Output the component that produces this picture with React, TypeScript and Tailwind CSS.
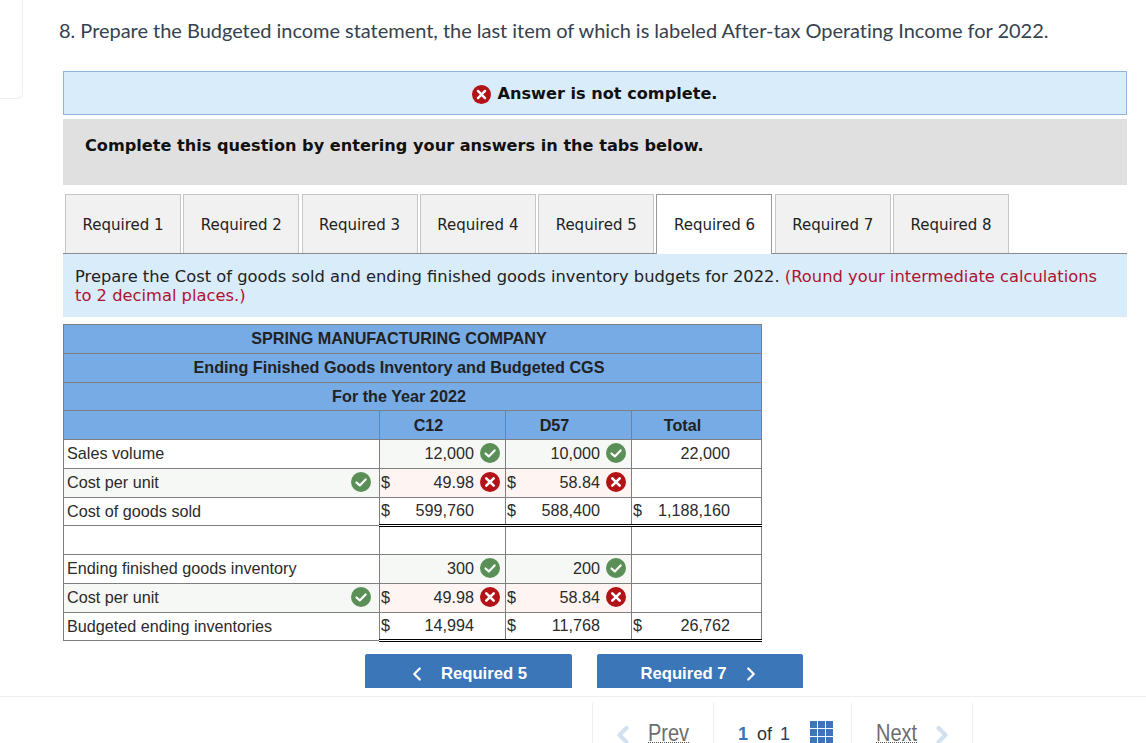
import { ChevronLeft, ChevronRight } from "lucide-react";

const tabs = [1, 2, 3, 4, 5, 6, 7, 8];

function CheckIcon({ size = 20 }: { size?: number }) {
  return (
    <svg width={size} height={size} viewBox="0 0 20 20" className="shrink-0">
      <circle cx="10" cy="10" r="10" fill="#5a8f57" />
      <path d="M5.5 10.5 L8.8 13.4 L14.6 7.4" fill="none" stroke="#fff" strokeWidth="2.2" strokeLinecap="round" strokeLinejoin="round" />
    </svg>
  );
}

function CrossIcon({ size = 20 }: { size?: number }) {
  return (
    <svg width={size} height={size} viewBox="0 0 20 20" className="shrink-0">
      <circle cx="10" cy="10" r="10" fill="#b31217" />
      <path d="M6.3 6.3 L13.7 13.7 M13.7 6.3 L6.3 13.7" fill="none" stroke="#fff" strokeWidth="2.6" strokeLinecap="round" />
    </svg>
  );
}

type Mark = "ok" | "bad";

function ValueCell({
  value,
  dollar,
  mark,
  total,
  underline,
}: {
  value?: string;
  dollar?: boolean;
  mark?: Mark;
  total?: boolean;
  underline?: boolean;
}) {
  const bg = mark === "ok" ? "bg-[#f6f8f5]" : mark === "bad" ? "bg-[#fef4f2]" : "bg-white";
  const border = total ? "border-b-[3px] border-b-black border-double" : underline ? "border-b-black" : "";
  return (
    <td className={`border border-[#7f7f7f] p-0 pb-[2px] ${bg} ${border}`}>
      <div className="flex items-center pl-[1px]">
        {dollar && <span>$</span>}
        <span className="flex-1 text-right">{value}</span>
        <span className="flex w-[31px] shrink-0 justify-end pr-[5px]">
          {mark === "ok" && <CheckIcon />}
          {mark === "bad" && <CrossIcon />}
        </span>
      </div>
    </td>
  );
}

function LabelCell({ label, ok }: { label?: string; ok?: boolean }) {
  return (
    <td className={`border border-[#7f7f7f] p-0 pb-[2px] pl-[3px] ${ok ? "bg-[#f6f8f5]" : "bg-white"}`}>
      <div className="flex items-center justify-between pr-[8px]">
        <span>{label}</span>
        {ok && <CheckIcon />}
      </div>
    </td>
  );
}

function TitleRow({ text, height }: { text: string; height: string }) {
  return (
    <tr className={height}>
      <td colSpan={4} className="border border-[#7f7f7f] bg-[#76abe5] p-0 pb-[2px] pr-[27px] text-center font-bold text-[#222]">
        {text}
      </td>
    </tr>
  );
}

function HeadCell({ text }: { text?: string }) {
  return (
    <td className="border border-[#7f7f7f] bg-[#76abe5] p-0 pr-[28px] text-center font-bold text-[#222]">{text}</td>
  );
}

function BudgetTable() {
  return (
    <table className="w-[698px] table-fixed border-collapse font-['Liberation_Sans',Arial,sans-serif] text-[16.2px] leading-[18px] text-[#2b2b2b]">
      <colgroup>
        <col className="w-[316px]" />
        <col className="w-[126px]" />
        <col className="w-[126px]" />
        <col className="w-[130px]" />
      </colgroup>
      <tbody>
        <TitleRow text="SPRING MANUFACTURING COMPANY" height="h-[29px]" />
        <TitleRow text="Ending Finished Goods Inventory and Budgeted CGS" height="h-[29px]" />
        <TitleRow text="For the Year 2022" height="h-[28px]" />
        <tr className="h-[29px]">
          <HeadCell />
          <HeadCell text="C12" />
          <HeadCell text="D57" />
          <HeadCell text="Total" />
        </tr>
        <tr className="h-[29px]">
          <LabelCell label="Sales volume" />
          <ValueCell value="12,000" mark="ok" />
          <ValueCell value="10,000" mark="ok" />
          <ValueCell value="22,000" />
        </tr>
        <tr className="h-[29px]">
          <LabelCell label="Cost per unit" ok />
          <ValueCell dollar value="49.98" mark="bad" underline />
          <ValueCell dollar value="58.84" mark="bad" underline />
          <ValueCell underline />
        </tr>
        <tr className="h-[28px]">
          <LabelCell label="Cost of goods sold" />
          <ValueCell dollar value="599,760" total />
          <ValueCell dollar value="588,400" total />
          <ValueCell dollar value="1,188,160" total />
        </tr>
        <tr className="h-[29px]">
          <LabelCell />
          <ValueCell />
          <ValueCell />
          <ValueCell />
        </tr>
        <tr className="h-[29px]">
          <LabelCell label="Ending finished goods inventory" />
          <ValueCell value="300" mark="ok" />
          <ValueCell value="200" mark="ok" />
          <ValueCell />
        </tr>
        <tr className="h-[29px]">
          <LabelCell label="Cost per unit" ok />
          <ValueCell dollar value="49.98" mark="bad" underline />
          <ValueCell dollar value="58.84" mark="bad" underline />
          <ValueCell underline />
        </tr>
        <tr className="h-[28px]">
          <LabelCell label="Budgeted ending inventories" />
          <ValueCell dollar value="14,994" total />
          <ValueCell dollar value="11,768" total />
          <ValueCell dollar value="26,762" total />
        </tr>
      </tbody>
    </table>
  );
}

function Pager() {
  return (
    <div className="flex h-[40px] overflow-hidden font-['Liberation_Sans',Arial,sans-serif] text-[#6d6d6d]">
      <div className="flex w-[122px] items-start border-x border-[#eeeeee] pl-[16px] pt-[18px]">
        <ChevronLeft className="h-[28px] w-[28px] text-[#d3e0ef]" strokeWidth={3.5} />
        <span className="ml-[11px] h-[22px] border-b border-dotted border-[#555] text-[20px] leading-[22px]">
          <span className="inline-block origin-bottom translate-y-[3px] scale-y-[1.15]">Prev</span>
        </span>
      </div>
      <div className="flex w-[138px] items-start border-r border-[#eeeeee] pl-[24px] pt-[21px] text-[18px] leading-[21px] text-[#333]">
        <span className="font-bold text-[#3a76b9]">1</span>
        <span className="ml-[9px]">of</span>
        <span className="ml-[8px] text-[#22456e]">1</span>
        <div className="ml-[20px] -mt-[3px] grid grid-cols-3 gap-[1.5px]">
          {Array.from({ length: 9 }).map((_, i) => (
            <span key={i} className="h-[6.5px] w-[6.5px] bg-[#3a76b9]" />
          ))}
        </div>
      </div>
      <div className="flex w-[121px] items-start border-r border-[#eeeeee] pl-[24px] pt-[18px]">
        <span className="h-[22px] border-b border-dotted border-[#555] text-[20px] leading-[22px]">
          <span className="inline-block origin-bottom translate-y-[3px] scale-y-[1.15]">Next</span>
        </span>
        <ChevronRight className="ml-[11px] h-[28px] w-[28px] text-[#d3e0ef]" strokeWidth={3.5} />
      </div>
    </div>
  );
}

export default function App() {
  return (
    <div className="h-[743px] w-[1146px] overflow-hidden bg-white">
      <div className="flex">
        <div className="h-[99px] w-[23px] shrink-0 rounded-br-[6px] border-b border-r border-[#eeeeee]" />
        <div className="ml-[40px] w-[1064px] shrink-0">
          <p className="-ml-[4px] mt-[18px] h-[53px] whitespace-nowrap font-['Lato',sans-serif] text-[20px] leading-[24px] tracking-[-0.03px] text-[#36424f]">
            8. Prepare the Budgeted income statement, the last item of which is labeled After-tax Operating Income for 2022.
          </p>

          <div className="flex h-[44px] items-center justify-center border border-[#8fb6dc] bg-[#d9ecfa] pt-[2px] font-['DejaVu_Sans',Verdana,sans-serif] text-[16.15px] font-bold text-[#111]">
            <CrossIcon size={19} />
            <span className="ml-[6px]">Answer is not complete.</span>
          </div>

          <div className="mt-[4px] h-[66px] bg-[#e0e0e0] pl-[22px] pt-[17px] font-['DejaVu_Sans',Verdana,sans-serif] text-[16.15px] font-bold leading-[20px] text-[#111]">
            Complete this question by entering your answers in the tabs below.
          </div>

          <div className="mt-[9px] flex gap-[2.3px] border-b border-[#8a8a8a] pl-[2px] font-['DejaVu_Sans',Verdana,sans-serif] text-[15px] text-[#222]">
            {tabs.map((n) => (
              <div
                key={n}
                className={
                  n === 6
                    ? "-mb-px flex h-[60px] w-[116px] items-center justify-center border border-b-0 border-[#999] bg-white pt-[2px]"
                    : "flex h-[59px] w-[116px] items-center justify-center border border-b-0 border-[#c6c6c6] bg-[#f1f1f1] pt-[2px]"
                }
              >
                Required {n}
              </div>
            ))}
          </div>

          <div className="h-[63px] bg-[#d9ecfa] pl-[12px] pr-[20px] pt-[13px] font-['DejaVu_Sans',Verdana,sans-serif] text-[16.32px] leading-[19px] text-[#222]">
            Prepare the Cost of goods sold and ending finished goods inventory budgets for 2022.{" "}
            <span className="text-[#b0122f]">(Round your intermediate calculations to 2 decimal places.)</span>
          </div>

          <div className="mt-[7px]">
            <BudgetTable />
          </div>

          <div className="ml-[302px] mt-[12px] flex gap-[25px] font-['Liberation_Sans',Arial,sans-serif] text-[16.7px] font-bold text-white">
            <div className="flex h-[34px] w-[207px] items-center justify-center rounded-t-[2px] bg-[#3b76b9] pr-[4px] pt-[6px]">
              <ChevronLeft className="h-[22px] w-[22px]" strokeWidth={2.5} />
              <span className="ml-[13px]">Required 5</span>
            </div>
            <div className="flex h-[34px] w-[206px] items-center justify-center rounded-t-[2px] bg-[#3b76b9] pl-[2px] pt-[6px]">
              <span className="mr-[13px]">Required 7</span>
              <ChevronRight className="h-[22px] w-[22px]" strokeWidth={2.5} />
            </div>
          </div>
        </div>
      </div>

      <div className="mt-[8px] border-t border-[#eeeeee] pl-[592px] pt-[6px]">
        <Pager />
      </div>
    </div>
  );
}
